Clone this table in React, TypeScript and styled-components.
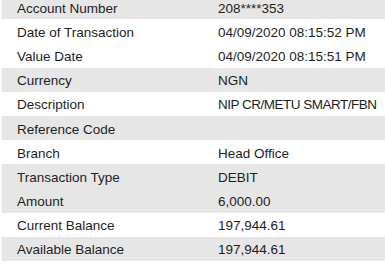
import React from 'react';
import styled, { createGlobalStyle } from 'styled-components';

const GlobalStyle = createGlobalStyle`
  body {
    margin: 0;
    background: #fff;
    font-family: "Liberation Sans", Arial, sans-serif;
    color: #1e1e1e;
  }
`;

const Table = styled.div`
  margin: -5px 0 0 2px;
  display: flex;
  flex-direction: column;
`;

const Row = styled.div<{ shaded?: boolean }>`
  display: grid;
  grid-template-columns: 201px 1fr;
  align-items: center;
  height: 24.2px;
  box-sizing: border-box;
  padding: 2px 0 0 15px;
  background: ${(p) => (p.shaded ? '#e6e6e6' : '#fff')};
  font-size: 13.5px;
`;

const Label = styled.span`
  white-space: nowrap;
`;

const Value = styled.span<{ tight?: boolean }>`
  white-space: nowrap;
  letter-spacing: ${(p) => (p.tight ? '-0.5px' : 'normal')};
`;

const rows: { label: string; value: string; shaded?: boolean; tight?: boolean }[] = [
  { label: 'Account Number', value: '208****353', shaded: true },
  { label: 'Date of Transaction', value: '04/09/2020 08:15:52 PM' },
  { label: 'Value Date', value: '04/09/2020 08:15:51 PM' },
  { label: 'Currency', value: 'NGN', shaded: true },
  { label: 'Description', value: 'NIP CR/METU SMART/FBN', tight: true },
  { label: 'Reference Code', value: '', shaded: true },
  { label: 'Branch', value: 'Head Office' },
  { label: 'Transaction Type', value: 'DEBIT', shaded: true },
  { label: 'Amount', value: '6,000.00', shaded: true },
  { label: 'Current Balance', value: '197,944.61' },
  { label: 'Available Balance', value: '197,944.61', shaded: true },
];

export default function App() {
  return (
    <>
      <GlobalStyle />
      <Table>
        {rows.map((r) => (
          <Row key={r.label} shaded={r.shaded}>
            <Label>{r.label}</Label>
            <Value tight={r.tight}>{r.value}</Value>
          </Row>
        ))}
      </Table>
    </>
  );
}
